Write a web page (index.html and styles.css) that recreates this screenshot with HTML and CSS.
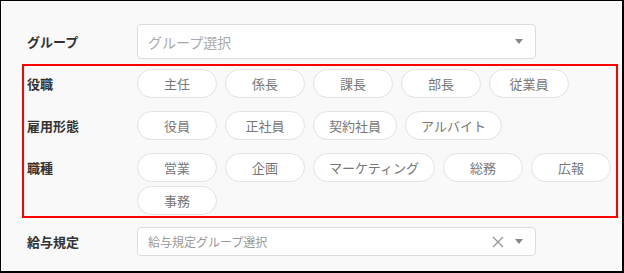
FILE: index.html
```html
<!DOCTYPE html>
<html lang="ja">

<head>
    <meta charset="UTF-8">
    <meta name="viewport" content="width=device-width, initial-scale=1.0">
    <title>絞り込み</title>
    <link rel="stylesheet" href="styles.css">
</head>

<body>
    <div class="frame">
        <div class="row">
            <div class="label">グループ</div>
            <div class="select big">
                <span class="placeholder">グループ選択</span>
                <span class="arrow"></span>
            </div>
        </div>

        <div class="filters">
            <div class="filterRow">
                <div class="label">役職</div>
                <div class="chips">
                    <span class="chip">主任</span>
                    <span class="chip">係長</span>
                    <span class="chip">課長</span>
                    <span class="chip">部長</span>
                    <span class="chip">従業員</span>
                </div>
            </div>
            <div class="filterRow">
                <div class="label">雇用形態</div>
                <div class="chips">
                    <span class="chip">役員</span>
                    <span class="chip">正社員</span>
                    <span class="chip">契約社員</span>
                    <span class="chip">アルバイト</span>
                </div>
            </div>
            <div class="filterRow">
                <div class="label">職種</div>
                <div class="chips">
                    <span class="chip">営業</span>
                    <span class="chip">企画</span>
                    <span class="chip">マーケティング</span>
                    <span class="chip">総務</span>
                    <span class="chip">広報</span>
                    <span class="chip">事務</span>
                </div>
            </div>
        </div>

        <div class="row">
            <div class="label">給与規定</div>
            <div class="select small">
                <span class="placeholder">給与規定グループ選択</span>
                <svg class="clear" width="12" height="12" viewBox="0 0 12 12">
                    <path d="M1 1L11 11M11 1L1 11" stroke="#999" stroke-width="1.4" fill="none" />
                </svg>
                <span class="arrow"></span>
            </div>
        </div>
    </div>
</body>

</html>
```

FILE: styles.css
```css
* {
    margin: 0;
    padding: 0;
    box-sizing: border-box;
}

body {
    font-family: "Noto Sans CJK JP", "Noto Sans", sans-serif;
    color: #333;
}

.frame {
    width: 624px;
    height: 273px;
    border: 1px solid #000;
    border-right-width: 2px;
    border-bottom-width: 2px;
    background: #f9f9f9;
    padding: 23px 0 0 21px;
}

.label {
    width: 115px;
    flex-shrink: 0;
    font-size: 13px;
    font-weight: bold;
    padding-left: 5px;
}

.row {
    display: flex;
    align-items: center;
    width: 514px;
}

.select {
    flex: 1;
    display: flex;
    align-items: center;
    background: #fff;
    border: 1px solid #ddd;
    border-radius: 4px;
    padding: 0 12px 0 10px;
}

.select.big {
    height: 35px;
}

.select.small {
    height: 29px;
}

.placeholder {
    flex: 1;
    color: #aaa;
    font-size: 14px;
}

.small .placeholder {
    font-size: 12px;
    color: #999;
}

.arrow {
    width: 0;
    height: 0;
    border-left: 4px solid transparent;
    border-right: 4px solid transparent;
    border-top: 5px solid #888;
}

.clear {
    margin-right: 11px;
}

.filters {
    width: 596px;
    margin: 5px 0 9px 0;
    border: 2px solid #f00;
    padding: 3px 0 1px 0;
    display: flex;
    flex-direction: column;
    gap: 13px;
}

.filterRow {
    display: flex;
    align-items: flex-start;
}

.filterRow .label {
    width: 113px;
    line-height: 29px;
    padding-left: 3px;
}

.chips {
    flex: 1;
    display: flex;
    flex-wrap: wrap;
    gap: 4px 8px;
}

.chip {
    min-width: 80px;
    height: 29px;
    line-height: 27px;
    padding: 0 15px;
    border: 1px solid #e2e2e2;
    border-radius: 15px;
    background: #fff;
    color: #777;
    font-size: 13px;
    text-align: center;
}
```
